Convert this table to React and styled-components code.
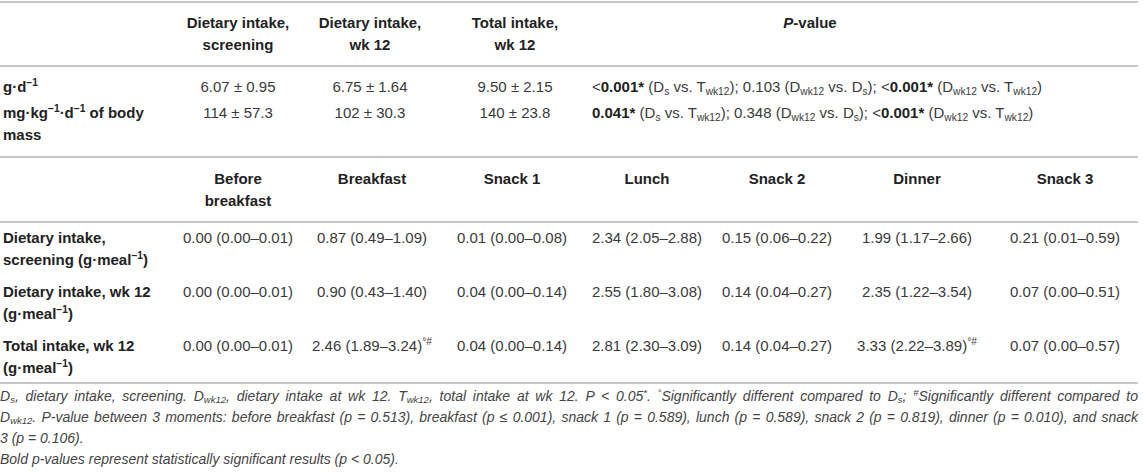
import React from "react";
import styled, { createGlobalStyle } from "styled-components";

const GlobalStyle = createGlobalStyle`
  body {
    margin: 0;
    background: #fff;
    font-family: "Liberation Sans", Arial, sans-serif;
    color: #3a3a3a;
  }
`;

const summaryCols = "174px 128px 136px 154px 1fr";
const mealCols = "174px 128px 140px 140px 130px 130px 150px 1fr";

const Page = styled.div`
  width: 1138px;
  padding-top: 1px;
`;

const Head = styled.div`
  display: grid;
  grid-template-columns: ${(p) => p.$cols};
  padding: ${(p) => p.$pad};
  border-top: ${(p) => (p.$top ? "2px solid #c6c6c6" : "none")};
  border-bottom: 2px solid #c6c6c6;
`;

const Body = styled.div`
  display: flex;
  flex-direction: column;
  gap: ${(p) => p.$gap}px;
  padding: ${(p) => p.$pad};
  border-bottom: 2px solid #c6c6c6;
`;

const Row = styled.div`
  display: grid;
  grid-template-columns: ${(p) => p.$cols};
  align-items: start;
`;

const HeadCell = styled.div`
  font-size: 15px;
  line-height: 22px;
  font-weight: bold;
  color: #222;
  text-align: center;
  padding-right: ${(p) => p.$padRight || 0}px;
`;

const Label = styled.div`
  font-size: 15px;
  line-height: 22px;
  font-weight: bold;
  color: #222;
  padding-left: 3px;
`;

const Value = styled.div`
  font-size: 15px;
  line-height: 22px;
  color: #3a3a3a;
  text-align: center;
  white-space: nowrap;
  padding-right: ${(p) => p.$padRight || 0}px;
`;

const Sup = styled.sup`
  font-size: 0.68em;
  line-height: 0;
  vertical-align: 0.55em;
`;

const Sub = styled.sub`
  font-size: 0.68em;
  line-height: 0;
  vertical-align: -0.25em;
`;

const Strong = styled.b`
  font-weight: bold;
  color: #222;
`;

const Notes = styled.div`
  padding-top: 2px;
  font-size: 14px;
  line-height: 21px;
  font-style: italic;
  color: #444;
`;

const NoteLine = styled.div`
  white-space: nowrap;
  text-align: ${(p) => (p.$justify ? "justify" : "left")};
  text-align-last: ${(p) => (p.$justify ? "justify" : "left")};
`;

const Ds = () => (
  <>
    D<Sub>s</Sub>
  </>
);
const Dwk = () => (
  <>
    D<Sub>wk12</Sub>
  </>
);
const Twk = () => (
  <>
    T<Sub>wk12</Sub>
  </>
);

const perMeal = (
  <>
    (g·meal<Sup>−1</Sup>)
  </>
);

const summaryRows = [
  {
    label: (
      <>
        g·d<Sup>−1</Sup>
      </>
    ),
    values: ["6.07 ± 0.95", "6.75 ± 1.64", "9.50 ± 2.15"],
    p: (
      <>
        &lt;<Strong>0.001*</Strong> (<Ds /> vs. <Twk />); 0.103 (<Dwk /> vs. <Ds />);{" "}
        &lt;<Strong>0.001*</Strong> (<Dwk /> vs. <Twk />)
      </>
    ),
  },
  {
    label: (
      <>
        mg·kg<Sup>−1</Sup>·d<Sup>−1</Sup> of body mass
      </>
    ),
    values: ["114 ± 57.3", "102 ± 30.3", "140 ± 23.8"],
    p: (
      <>
        <Strong>0.041*</Strong> (<Ds /> vs. <Twk />); 0.348 (<Dwk /> vs. <Ds />);{" "}
        &lt;<Strong>0.001*</Strong> (<Dwk /> vs. <Twk />)
      </>
    ),
  },
];

const meals = [
  <>
    Before
    <br />
    breakfast
  </>,
  "Breakfast",
  "Snack 1",
  "Lunch",
  "Snack 2",
  "Dinner",
  "Snack 3",
];

const mark = <Sup>°#</Sup>;

const mealRows = [
  {
    label: <>Dietary intake, screening {perMeal}</>,
    values: [
      "0.00 (0.00–0.01)",
      "0.87 (0.49–1.09)",
      "0.01 (0.00–0.08)",
      "2.34 (2.05–2.88)",
      "0.15 (0.06–0.22)",
      "1.99 (1.17–2.66)",
      "0.21 (0.01–0.59)",
    ],
  },
  {
    label: <>Dietary intake, wk 12 {perMeal}</>,
    values: [
      "0.00 (0.00–0.01)",
      "0.90 (0.43–1.40)",
      "0.04 (0.00–0.14)",
      "2.55 (1.80–3.08)",
      "0.14 (0.04–0.27)",
      "2.35 (1.22–3.54)",
      "0.07 (0.00–0.51)",
    ],
  },
  {
    label: <>Total intake, wk 12 {perMeal}</>,
    values: [
      "0.00 (0.00–0.01)",
      <>2.46 (1.89–3.24){mark}</>,
      "0.04 (0.00–0.14)",
      "2.81 (2.30–3.09)",
      "0.14 (0.04–0.27)",
      <>3.33 (2.22–3.89){mark}</>,
      "0.07 (0.00–0.57)",
    ],
  },
];

export default function App() {
  return (
    <Page>
      <GlobalStyle />

      <Head $cols={summaryCols} $pad="9px 0" $top>
        <div />
        <HeadCell>
          Dietary intake,
          <br />
          screening
        </HeadCell>
        <HeadCell>
          Dietary intake,
          <br />
          wk 12
        </HeadCell>
        <HeadCell>
          Total intake,
          <br />
          wk 12
        </HeadCell>
        <HeadCell $padRight={110}>
          <i>P</i>-value
        </HeadCell>
      </Head>
      <Body $gap={4} $pad="9px 0 10px">
        {summaryRows.map((r, i) => (
          <Row key={i} $cols={summaryCols}>
            <Label>{r.label}</Label>
            {r.values.map((v, j) => (
              <Value key={j}>{v}</Value>
            ))}
            <Value $padRight={110}>{r.p}</Value>
          </Row>
        ))}
      </Body>

      <Head $cols={mealCols} $pad="10px 0 9px">
        <div />
        {meals.map((m, i) => (
          <HeadCell key={i}>{m}</HeadCell>
        ))}
      </Head>
      <Body $gap={10} $pad="4px 0 3px">
        {mealRows.map((r, i) => (
          <Row key={i} $cols={mealCols}>
            <Label>{r.label}</Label>
            {r.values.map((v, j) => (
              <Value key={j}>{v}</Value>
            ))}
          </Row>
        ))}
      </Body>

      <Notes>
        <NoteLine $justify>
          <Ds />, dietary intake, screening. <Dwk />, dietary intake at wk 12. <Twk />, total
          intake at wk 12. P &lt; 0.05<Sup>*</Sup>. <Sup>°</Sup>Significantly different compared
          to <Ds />; <Sup>#</Sup>Significantly different compared to
        </NoteLine>
        <NoteLine $justify>
          <Dwk />. P-value between 3 moments: before breakfast (p = 0.513), breakfast (p ≤ 0.001),
          snack 1 (p = 0.589), lunch (p = 0.589), snack 2 (p = 0.819), dinner (p = 0.010), and
          snack
        </NoteLine>
        <NoteLine>3 (p = 0.106).</NoteLine>
        <NoteLine>Bold p-values represent statistically significant results (p &lt; 0.05).</NoteLine>
      </Notes>
    </Page>
  );
}
